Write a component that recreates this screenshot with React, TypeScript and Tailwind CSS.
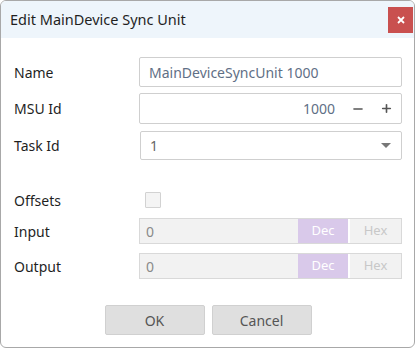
import { Minus, Plus } from 'lucide-react';

const font = { fontFamily: '"Segoe UI", "Noto Sans", "Open Sans", sans-serif' };

function Label({ children }: { children: React.ReactNode }) {
  return <div className="w-[125px] text-[14px] text-[#1f1f1f]">{children}</div>;
}

function BaseField({ label }: { label: string }) {
  return (
    <div className="flex items-center h-[26px]">
      <Label>{label}</Label>
      <div className="flex flex-1 h-[26px] border border-[#d9d9d9] bg-[#f2f2f2]">
        <div className="flex-1 flex items-center px-[6px] text-[14px] text-[#8a8a8a]">0</div>
        <div className="w-[50px] flex items-center justify-center bg-[#d9c9ea] text-[13px] text-white">Dec</div>
        <div className="w-[2px] bg-white" />
        <div className="w-[51px] flex items-center justify-center bg-[#f2f2f2] text-[13px] text-[#c8c8c8]">Hex</div>
      </div>
    </div>
  );
}

export default function App() {
  return (
    <div style={font} className="w-[415px] h-[348px] bg-white">
      <div className="w-full h-full flex flex-col border border-[#a8a8a8] rounded-[6px] overflow-hidden bg-white">
        {/* Title */}
        <div className="h-[37px] flex items-center justify-between bg-[#eef5fb] pl-[9px] pr-[1px] shrink-0">
          <span className="text-[14.5px] text-[#1f1f1f]">Edit MainDevice Sync Unit</span>
          <button className="w-[25px] h-[26px] flex items-center justify-center bg-[#c9504f] text-white">
            <svg width="8" height="8" viewBox="0 0 8 8">
              <path d="M1 1L7 7M7 1L1 7" stroke="white" strokeWidth="1.8" />
            </svg>
          </button>
        </div>

        <div className="flex flex-col pl-[13px] pr-[12px] pt-[19px]">
          <div className="flex items-center">
            <Label>Name</Label>
            <div className="flex-1 h-[30px] flex items-center border border-[#cfcfcf] rounded-[2px] px-[9px] text-[14px] text-[#5f6f86]">
              MainDeviceSyncUnit 1000
            </div>
          </div>

          <div className="flex items-center mt-[6px]">
            <Label>MSU Id</Label>
            <div className="flex-1 h-[31px] flex items-center justify-end border border-[#cfcfcf] rounded-[2px] pr-[8px] text-[14px] text-[#5f6f86]">
              <span>1000</span>
              <Minus className="w-[14px] h-[14px] ml-[16px] text-[#555]" strokeWidth={2.6} />
              <Plus className="w-[13px] h-[13px] ml-[15px] text-[#555]" strokeWidth={3} />
            </div>
          </div>

          <div className="flex items-center mt-[7px]">
            <Label>Task Id</Label>
            <div className="flex-1 h-[29px] flex items-center justify-between border border-[#cfcfcf] rounded-[2px] pl-[9px] pr-[10px] ml-[1px] text-[14px] text-[#666]">
              <span>1</span>
              <svg width="10" height="6" viewBox="0 0 10 6">
                <path d="M0 0H10L5 5Z" fill="#777" />
              </svg>
            </div>
          </div>

          <div className="flex items-center mt-[31px] h-[18px]">
            <Label>Offsets</Label>
            <div className="w-[16px] h-[16px] ml-[6px] border border-[#d2d2d2] bg-[#f4f4f4] rounded-[1px]" />
          </div>

          <div className="mt-[9px]">
            <BaseField label="Input" />
          </div>
          <div className="mt-[9px]">
            <BaseField label="Output" />
          </div>
        </div>

        <div className="flex justify-center gap-[7px] mt-[26px] pl-[1px]">
          <button className="w-[100px] h-[30px] bg-[#dfdfdf] border border-[#d0d0d0] rounded-[2px] text-[14px] text-[#555]">OK</button>
          <button className="w-[100px] h-[30px] bg-[#dfdfdf] border border-[#d0d0d0] rounded-[2px] text-[14px] text-[#555]">Cancel</button>
        </div>
      </div>
    </div>
  );
}
